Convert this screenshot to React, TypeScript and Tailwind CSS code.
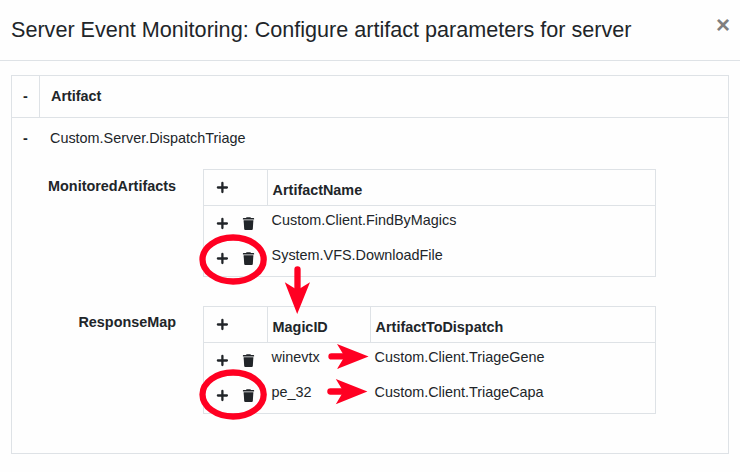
import React from "react";

type Column = { name: string; width: string };

function PlusIcon() {
  return (
    <svg className="h-[13px] w-[13px] shrink-0" viewBox="0 0 13 13" stroke="currentColor" strokeWidth="2.3" strokeLinecap="round">
      <path d="M6.4 2V11M1.9 6.5H10.9" />
    </svg>
  );
}

function TrashIcon() {
  return (
    <svg className="h-[13px] w-[13px] shrink-0" viewBox="0 0 13 13" fill="currentColor">
      <path d="M4.6 0.2H8.4L9 0.9H11.6Q12.1 0.9 12.1 1.4V2.5H0.9V1.4Q0.9 0.9 1.4 0.9H4Z" />
      <path d="M1.6 3.3H11.4L10.8 12.1Q10.7 13 9.8 13H3.2Q2.3 13 2.2 12.1Z" />
    </svg>
  );
}

function EditableTable({ columns, rows }: { columns: Column[]; rows: string[][] }) {
  return (
    <div className="flex w-[453px] flex-col border border-[#dee2e6]">
      <div className="flex h-[36px] border-b border-[#dee2e6]">
        <div className="w-[64px] shrink-0 border-r border-[#dee2e6] pt-[11px] pl-[12px]">
          <PlusIcon />
        </div>
        {columns.map((column, i) => (
          <div
            key={column.name}
            className={`${column.width} pt-[9px] pl-[4.6px] font-bold ${i < columns.length - 1 ? "border-r border-[#dee2e6]" : ""}`}
          >
            {column.name}
          </div>
        ))}
      </div>
      <div className="h-[70px]">
        {rows.map((row) => (
          <div key={row.join()} className="flex h-[35px]">
            <div className="flex w-[64px] shrink-0 gap-[13px] pt-[11px] pl-[12px]">
              <PlusIcon />
              <TrashIcon />
            </div>
            {row.map((value, i) => (
              <div key={value} className={`${columns[i].width} pt-[3px] pl-[3.6px]`}>
                {value}
              </div>
            ))}
          </div>
        ))}
      </div>
    </div>
  );
}

function Annotations() {
  return (
    <svg
      className="pointer-events-none absolute inset-0"
      width="740"
      height="472"
      viewBox="0 0 740 472"
      fill="none"
      stroke="#ff0022"
      strokeWidth="6.3"
      strokeLinecap="round"
    >
      <ellipse cx="233.1" cy="259.5" rx="30.6" ry="22" />
      <ellipse cx="233.1" cy="394.5" rx="30.6" ry="22" />
      <path d="M297.5 269.3V292M331.5 356.4H347M330.4 391.5H346" />
      <g fill="#ff0022" stroke="none">
        <path d="M297.2 314L284.8 282.3L297.4 290L310 282.3Z" />
        <path d="M368.6 356.4L337 344L344.6 356.4L337 369Z" />
        <path d="M367.4 391.5L335.8 379L343.4 391.5L335.8 404.2Z" />
      </g>
    </svg>
  );
}

export default function App() {
  return (
    <div className="relative h-[472px] w-[740px] overflow-hidden bg-[#fefefe] font-['Liberation_Sans',Arial,sans-serif] text-[14.4px] leading-[22px] text-[#212529]">
      <header className="flex h-[61px] items-start justify-between border-b border-[#dee2e6] pr-[10px] pl-[11px]">
        <h4 className="pt-[14px] text-[21.6px] leading-[32px]">
          Server Event Monitoring: Configure artifact parameters for server
        </h4>
        <button className="pt-[14px] text-[24px] leading-[22px] font-bold text-[#7f7f7f]">×</button>
      </header>
      <main className="mt-[14px] ml-[11px] flex h-[379px] w-[718px] flex-col border border-[#dee2e6]">
        <div className="flex h-[42px] border-b border-[#dee2e6] font-bold">
          <div className="w-[28px] border-r border-[#dee2e6] pt-[9px] pl-[11px]">-</div>
          <div className="pt-[9px] pl-[11px]">Artifact</div>
        </div>
        <div className="flex h-[51px] pt-[9px]">
          <div className="w-[38px] pl-[11px] font-bold">-</div>
          <div>Custom.Server.DispatchTriage</div>
        </div>
        <div className="flex flex-col gap-[29px]">
          <div className="flex gap-[27px]">
            <div className="w-[164px] pt-[6px] text-right font-bold">MonitoredArtifacts</div>
            <EditableTable
              columns={[{ name: "ArtifactName", width: "flex-1" }]}
              rows={[["Custom.Client.FindByMagics"], ["System.VFS.DownloadFile"]]}
            />
          </div>
          <div className="flex gap-[27px]">
            <div className="w-[164px] pt-[5px] text-right font-bold">ResponseMap</div>
            <EditableTable
              columns={[
                { name: "MagicID", width: "w-[103px]" },
                { name: "ArtifactToDispatch", width: "flex-1" },
              ]}
              rows={[
                ["winevtx", "Custom.Client.TriageGene"],
                ["pe_32", "Custom.Client.TriageCapa"],
              ]}
            />
          </div>
        </div>
      </main>
      <Annotations />
    </div>
  );
}
